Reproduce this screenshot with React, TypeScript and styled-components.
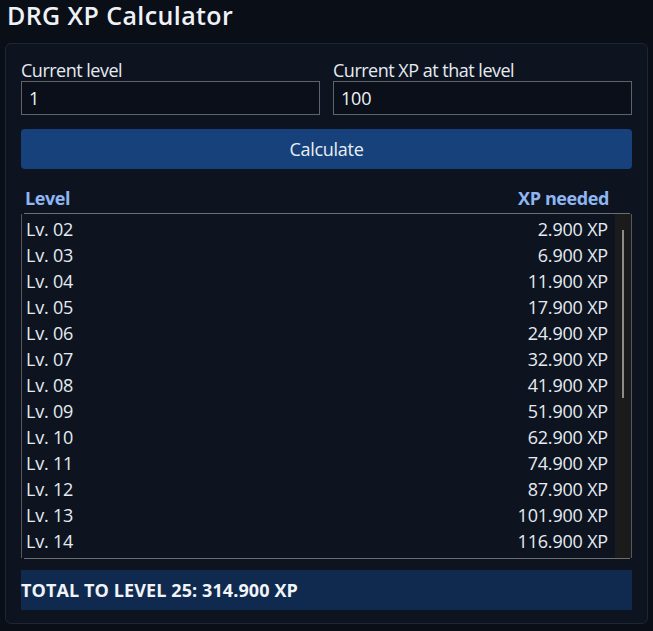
import React from "react";
import styled, { createGlobalStyle } from "styled-components";

const Global = createGlobalStyle`
  html, body { margin: 0; padding: 0; background: #0a0e17; }
  body {
    font-family: "Open Sans", "Noto Sans", "Liberation Sans", sans-serif;
    color: #e6ebf2;
  }
  * { box-sizing: border-box; }
`;

const Page = styled.div`
  padding: 0 5px 8px 5px;
`;

const Title = styled.h1`
  margin: 0;
  padding: 0 0 0 2px;
  font-size: 25px;
  line-height: 30px;
  font-weight: 600;
  letter-spacing: 0.4px;
  color: #eef2f7;
  height: 43px;
`;

const Card = styled.section`
  background: #0d1420;
  border: 1px solid #1d2636;
  border-radius: 6px;
  padding: 15px 15px 13px 15px;
  display: flex;
  flex-direction: column;
`;

const Fields = styled.div`
  display: grid;
  grid-template-columns: 1fr 1fr;
  column-gap: 13px;
`;

const Field = styled.label`
  display: flex;
  flex-direction: column;
`;

const LabelText = styled.span`
  font-size: 18px;
  line-height: 22px;
  letter-spacing: -0.5px;
  color: #e6ebf2;
`;

const Input = styled.input`
  height: 34px;
  width: 100%;
  background: #0a0f19;
  border: 1px solid #5f6266;
  color: #eef2f7;
  font-family: inherit;
  font-size: 18px;
  letter-spacing: -0.2px;
  padding: 0 7px;
  outline: none;
`;

const Button = styled.button`
  margin-top: 14px;
  height: 40px;
  border: none;
  border-radius: 4px;
  background: #17417a;
  color: #e9eef6;
  font-family: inherit;
  font-size: 18px;
  letter-spacing: -0.3px;
  cursor: pointer;
`;

const HeadRow = styled.div`
  margin: 14px 2px 0 3px;
  height: 31px;
  display: flex;
  align-items: center;
  justify-content: space-between;
  padding: 0 21px 0 1px;
  border-bottom: 1px solid #6a6d72;
  font-weight: 700;
  font-size: 18px;
  letter-spacing: -0.4px;
  color: #8fb6f2;
`;

const Scroll = styled.div`
  height: 344px;
  display: flex;
  border-left: 1px solid #55585d;
  border-right: 1px solid #55585d;
`;

const List = styled.div`
  flex: 1;
  overflow: hidden;
  padding-top: 2px;
`;

const Track = styled.div`
  width: 16px;
  flex: none;
  background: #1b1b1b;
  padding: 16px 0 0 7px;
`;

const Thumb = styled.div`
  width: 2px;
  height: 168px;
  background: #8c8c8c;
`;

const Row = styled.div`
  height: 26px;
  display: flex;
  align-items: center;
  justify-content: space-between;
  padding: 0 7px 0 4px;
  font-size: 18px;
  letter-spacing: -0.2px;
  color: #e6ebf2;
`;

const BottomLine = styled.div`
  margin: 0 2px 0 3px;
  border-top: 1px solid #6a6d72;
`;

const Total = styled.div`
  margin-top: 11px;
  height: 40px;
  background: #0f2a4e;
  display: flex;
  align-items: center;
  font-weight: 700;
  font-size: 18px;
  letter-spacing: 0.1px;
  color: #f1f4f8;
`;

const diffs = [3000, 4000, 5000, 6000, 7000, 8000, 9000, 10000, 11000, 12000, 13000, 14000, 15000,
  16000, 17000, 18000, 18000, 18000, 18000, 19000, 19000, 19000, 18000, 18000];

function fmt(n: number) {
  return n.toLocaleString("de-DE");
}

export default function App() {
  const startXp = 100;
  let acc = 0;
  const rows = diffs.map((d, i) => {
    acc += d;
    return { level: i + 2, xp: acc - startXp };
  });
  const total = rows[rows.length - 1].xp;
  return (
    <Page>
      <Global />
      <Title>DRG XP Calculator</Title>
      <Card>
        <Fields>
          <Field>
            <LabelText>Current level</LabelText>
            <Input defaultValue="1" />
          </Field>
          <Field>
            <LabelText>Current XP at that level</LabelText>
            <Input defaultValue="100" />
          </Field>
        </Fields>
        <Button>Calculate</Button>
        <HeadRow>
          <span>Level</span>
          <span>XP needed</span>
        </HeadRow>
        <Scroll>
          <List>
            {rows.map((r) => (
              <Row key={r.level}>
                <span>Lv. {String(r.level).padStart(2, "0")}</span>
                <span>{fmt(r.xp)} XP</span>
              </Row>
            ))}
          </List>
          <Track>
            <Thumb />
          </Track>
        </Scroll>
        <BottomLine />
        <Total>TOTAL TO LEVEL 25: {fmt(total)} XP</Total>
      </Card>
    </Page>
  );
}
